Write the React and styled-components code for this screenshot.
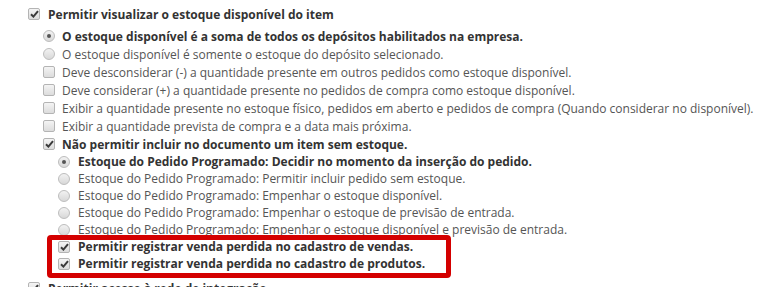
import React from "react";
import styled, { createGlobalStyle, css } from "styled-components";

const Global = createGlobalStyle`
  html, body { margin: 0; padding: 0; background: #fff; }
  body { font-family: "Open Sans", "Noto Sans", sans-serif; font-size: 12px; color: #555; }
`;

const Page = styled.div`
  padding: 5px 0 0 0;
  width: 759px;
  height: 287px;
  overflow: hidden;
  box-sizing: border-box;
`;

const Group = styled.div`
  display: flex;
  flex-direction: column;
  margin-top: ${(p) => p.$gap || 0}px;
`;

const Row = styled.label`
  display: flex;
  align-items: center;
  gap: ${(p) => (p.$level === 1 ? 7 : 8)}px;
  height: ${(p) => (p.$level === 2 ? 17 : 18)}px;
  padding-left: ${(p) => 28 + p.$level * 15}px;
  white-space: nowrap;
  font-weight: ${(p) => (p.$bold ? 700 : 400)};
  color: ${(p) => (p.$bold ? "#333" : "#555")};
`;

const boxBase = css`
  flex: none;
  width: 12px;
  height: 12px;
  box-sizing: border-box;
  border: 1px solid #b4b4b4;
  background: linear-gradient(#f4f4f4, #dcdcdc);
  display: flex;
  align-items: center;
  justify-content: center;
`;

const Box = styled.span`
  ${boxBase};
  border-radius: 2px;
`;

const Radio = styled.span`
  ${boxBase};
  border-radius: 50%;
  border-color: #bdbdbd;
  background: linear-gradient(#f2f2f2, #d8d8d8);
  &::after {
    content: "";
    display: ${(p) => (p.$on ? "block" : "none")};
    width: 4px;
    height: 4px;
    border-radius: 50%;
    background: #555;
  }
`;

const Highlight = styled.div`
  position: relative;
  display: flex;
  flex-direction: column;
  &::before {
    content: "";
    position: absolute;
    left: 47px;
    top: -3px;
    width: 404px;
    height: 43px;
    box-sizing: border-box;
    border: 5px solid #d40000;
    border-radius: 4px;
    pointer-events: none;
  }
`;

const Check = () => (
  <svg width="9" height="8" viewBox="0 0 9 8">
    <path d="M1 4.2 L3.4 6.6 L8 1.2" fill="none" stroke="#3a3a3a" strokeWidth="2" />
  </svg>
);

const Item = ({ level = 0, type = "check", on, bold, children }) => (
  <Row $level={level} $bold={bold}>
    {type === "radio" ? <Radio $on={on} /> : <Box>{on && <Check />}</Box>}
    <span>{children}</span>
  </Row>
);

export default function App() {
  return (
    <Page>
      <Global />
      <Item on bold>Permitir visualizar o estoque disponível do item</Item>
      <Group $gap={4}>
        <Item level={1} type="radio" on bold>O estoque disponível é a soma de todos os depósitos habilitados na empresa.</Item>
        <Item level={1} type="radio">O estoque disponível é somente o estoque do depósito selecionado.</Item>
        <Item level={1}>Deve desconsiderar (-) a quantidade presente em outros pedidos como estoque disponível.</Item>
        <Item level={1}>Deve considerar (+) a quantidade presente no pedidos de compra como estoque disponível.</Item>
        <Item level={1}>Exibir a quantidade presente no estoque físico, pedidos em aberto e pedidos de compra (Quando considerar no disponível).</Item>
        <Item level={1}>Exibir a quantidade prevista de compra e a data mais próxima.</Item>
        <Item level={1} on bold>Não permitir incluir no documento um item sem estoque.</Item>
      </Group>
      <Group>
        <Item level={2} type="radio" on bold>Estoque do Pedido Programado: Decidir no momento da inserção do pedido.</Item>
        <Item level={2} type="radio">Estoque do Pedido Programado: Permitir incluir pedido sem estoque.</Item>
        <Item level={2} type="radio">Estoque do Pedido Programado: Empenhar o estoque disponível.</Item>
        <Item level={2} type="radio">Estoque do Pedido Programado: Empenhar o estoque de previsão de entrada.</Item>
        <Item level={2} type="radio">Estoque do Pedido Programado: Empenhar o estoque disponível e previsão de entrada.</Item>
        <Highlight>
          <Item level={2} on bold>Permitir registrar venda perdida no cadastro de vendas.</Item>
          <Item level={2} on bold>Permitir registrar venda perdida no cadastro de produtos.</Item>
        </Highlight>
      </Group>
      <Group $gap={7}>
        <Item on bold>Permitir acesso à rede de integração</Item>
      </Group>
    </Page>
  );
}
